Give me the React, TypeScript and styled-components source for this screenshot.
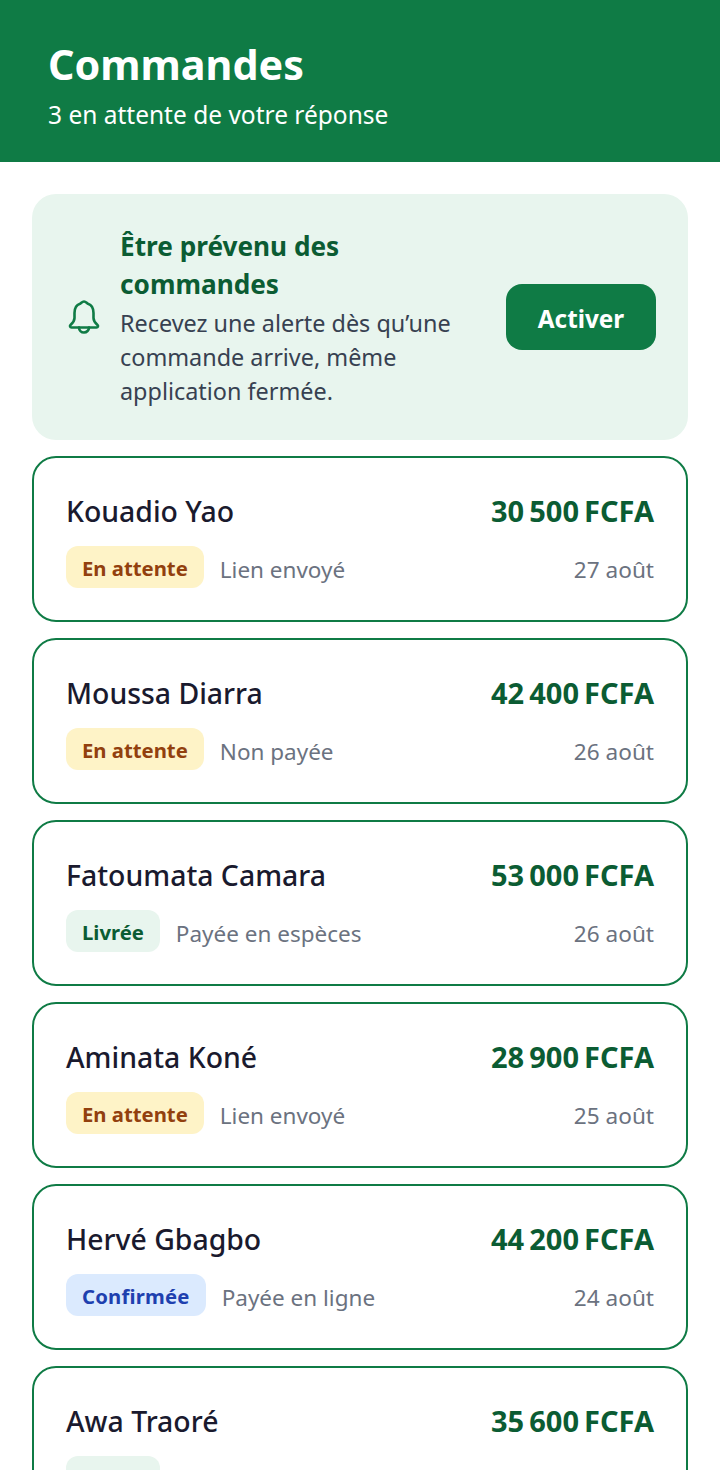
import styled, { createGlobalStyle } from "styled-components"

const GlobalStyle = createGlobalStyle`
  html, body {
    margin: 0;
    padding: 0;
    background: #ffffff;
    font-family: "Noto Sans", "Open Sans", sans-serif;
    height: 1470px;
    overflow: hidden;
  }
`

const Header = styled.header`
  background: #0f7b45;
  color: #ffffff;
  height: 162px;
  box-sizing: border-box;
  padding: 36px 48px 0;
`

const Title = styled.h1`
  margin: 0;
  font-size: 41.3px;
  line-height: 56px;
  font-weight: 700;
`

const Subtitle = styled.p`
  margin: 6px 0 0;
  font-size: 24.5px;
  line-height: 34px;
`

const Content = styled.main`
  padding: 32px 32px 0;
  display: flex;
  flex-direction: column;
  gap: 16px;
`

const Banner = styled.section`
  background: #e8f5ee;
  border-radius: 24px;
  padding: 34px 32px 32px;
  display: flex;
  align-items: center;
  gap: 16px;
`

const BellSvg = styled.svg`
  flex: none;
  width: 40px;
  height: 36px;
  color: #0f7b45;
`

const BannerText = styled.div`
  flex: 1;
  min-width: 0;
`

const BannerTitle = styled.div`
  font-size: 26.2px;
  line-height: 38px;
  font-weight: 700;
  color: #0b5c33;
  margin-top: -1px;
  margin-bottom: 3px;
`

const BannerBody = styled.div`
  font-size: 23.4px;
  line-height: 34px;
  color: #374151;
`

const EnableButton = styled.button`
  flex: none;
  width: 150px;
  height: 66px;
  margin-top: -2px;
  padding: 3px 0 0;
  border: none;
  border-radius: 16px;
  background: #0f7b45;
  color: #ffffff;
  font-family: inherit;
  font-size: 24.3px;
  font-weight: 700;
`

const Card = styled.article`
  border: 2px solid #0f7b45;
  border-radius: 24px;
  background: #ffffff;
  height: 166px;
  box-sizing: border-box;
  padding: 32px 32px 0;
  display: flex;
  flex-direction: column;
  gap: 14px;
`

const Row = styled.div`
  display: flex;
  align-items: flex-start;
  justify-content: space-between;
`

const Name = styled.div`
  font-size: 28.4px;
  line-height: 42px;
  font-weight: 500;
  color: #1a1a2e;
`

const Amount = styled.div`
  font-size: 29px;
  line-height: 42px;
  font-weight: 700;
  word-spacing: -2.5px;
  color: #0b5c33;
`

const Meta = styled.div`
  display: flex;
  align-items: flex-start;
  gap: 16px;
`

const tones = {
  pending: { bg: "#fef3c7", fg: "#92400e", spacing: "0" },
  delivered: { bg: "#e8f5ee", fg: "#0b5c33", spacing: "0" },
  confirmed: { bg: "#dbeafe", fg: "#1e40af", spacing: "0.2px" },
}

type Tone = keyof typeof tones

const Badge = styled.span<{ $tone: Tone }>`
  background: ${({ $tone }) => tones[$tone].bg};
  color: ${({ $tone }) => tones[$tone].fg};
  letter-spacing: ${({ $tone }) => tones[$tone].spacing};
  border-radius: 12px;
  height: 42px;
  box-sizing: border-box;
  padding: 2px 16px 0;
  display: inline-flex;
  align-items: center;
  font-size: 20.3px;
  font-weight: 700;
`

const Note = styled.span`
  font-size: 22.5px;
  line-height: 48px;
  color: #6b7280;
`

const DateText = styled.span`
  font-size: 22.6px;
  line-height: 48px;
  color: #6b7280;
`

const orders: { name: string; amount: string; tone: Tone; status: string; note: string; date: string }[] = [
  { name: "Kouadio Yao", amount: "30 500 FCFA", tone: "pending", status: "En attente", note: "Lien envoyé", date: "27 août" },
  { name: "Moussa Diarra", amount: "42 400 FCFA", tone: "pending", status: "En attente", note: "Non payée", date: "26 août" },
  { name: "Fatoumata Camara", amount: "53 000 FCFA", tone: "delivered", status: "Livrée", note: "Payée en espèces", date: "26 août" },
  { name: "Aminata Koné", amount: "28 900 FCFA", tone: "pending", status: "En attente", note: "Lien envoyé", date: "25 août" },
  { name: "Hervé Gbagbo", amount: "44 200 FCFA", tone: "confirmed", status: "Confirmée", note: "Payée en ligne", date: "24 août" },
  { name: "Awa Traoré", amount: "35 600 FCFA", tone: "delivered", status: "Livrée", note: "Payée en espèces", date: "24 août" },
]

function BellIcon() {
  return (
    <BellSvg viewBox="-4 0 40 36" fill="none" stroke="currentColor" strokeWidth="2.6" strokeLinecap="round" strokeLinejoin="round">
      <path d="M16 1.5c-2 0-2.600 1.600-4 2.200C8 5 6.500 9 6.500 13v5c0 3-1.700 5-4 7-1 1-.5 2.500 1 2.500h25c1.500 0 2-1.500 1-2.500-2.300-2-4-4-4-7v-5c0-4-1.500-8-5.500-9.300C18.600 3.100 18 1.500 16 1.500z" />
      <path d="M11 27.500a5 5 0 0 0 10 0" />
    </BellSvg>
  )
}

export default function App() {
  return (
    <>
      <GlobalStyle />
      <Header>
        <Title>Commandes</Title>
        <Subtitle>3 en attente de votre réponse</Subtitle>
      </Header>
      <Content>
        <Banner>
          <BellIcon />
          <BannerText>
            <BannerTitle>Être prévenu des commandes</BannerTitle>
            <BannerBody>Recevez une alerte dès qu’une commande arrive, même application fermée.</BannerBody>
          </BannerText>
          <EnableButton>Activer</EnableButton>
        </Banner>
        {orders.map((order) => (
          <Card key={order.name}>
            <Row>
              <Name>{order.name}</Name>
              <Amount>{order.amount}</Amount>
            </Row>
            <Row>
              <Meta>
                <Badge $tone={order.tone}>{order.status}</Badge>
                <Note>{order.note}</Note>
              </Meta>
              <DateText>{order.date}</DateText>
            </Row>
          </Card>
        ))}
      </Content>
    </>
  )
}
